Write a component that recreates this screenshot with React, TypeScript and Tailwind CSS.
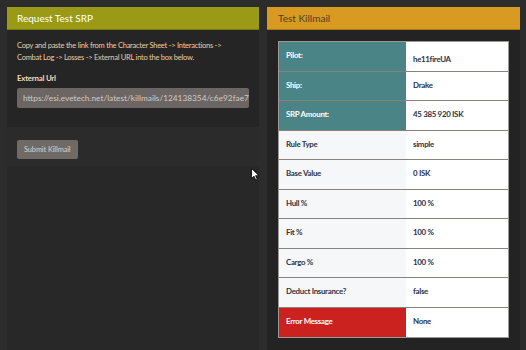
import React from "react";

const rows: { label: string; value: string; kind: "teal" | "light" | "error" }[] = [
  { label: "Pilot:", value: "he11fireUA", kind: "teal" },
  { label: "Ship:", value: "Drake", kind: "teal" },
  { label: "SRP Amount:", value: "45 385 920 ISK", kind: "teal" },
  { label: "Rule Type", value: "simple", kind: "light" },
  { label: "Base Value", value: "0 ISK", kind: "light" },
  { label: "Hull %", value: "100 %", kind: "light" },
  { label: "Fit %", value: "100 %", kind: "light" },
  { label: "Cargo %", value: "100 %", kind: "light" },
  { label: "Deduct Insurance?", value: "false", kind: "light" },
  { label: "Error Message", value: "None", kind: "error" },
];

const labelBg = {
  teal: "bg-[#4a8486] text-white",
  light: "bg-[#f6f7f9] text-[#2f3442]",
  error: "bg-[#cb221f] text-white",
};

export default function App() {
  return (
    <div
      className="relative w-[526px] h-[350px] overflow-hidden bg-[#2c2c2c] flex gap-[8px] pl-[7px] pt-[7px]"
      style={{ fontFamily: "Lato, 'Liberation Sans', sans-serif" }}
    >
      {/* left panel */}
      <section className="w-[252px] h-[343px] bg-[#252525] flex flex-col">
        <header className="h-[23px] bg-[#9b9a17] border-b border-[#7c7b12] px-[10px] flex items-center text-[10px] text-white">
          Request Test SRP
        </header>
        <div className="px-[10px] pt-[10px] pb-[19px]">
          <p className="text-[7.5px] leading-[12px] tracking-[-0.25px] whitespace-nowrap text-[#ebcfa6]">
            Copy and paste the link from the Character Sheet -&gt; Interactions -&gt;
            <br />
            Combat Log -&gt; Losses -&gt; External URL into the box below.
          </p>
          <div className="mt-[9px] leading-[10px] text-[7.8px] tracking-[-0.2px] font-bold text-[#f1dcc0]">
            External Url
          </div>
          <div className="mt-[5px] h-[20px] rounded-[2px] bg-[#6b6663] px-[6px] flex items-center overflow-hidden whitespace-nowrap text-[8.3px] text-[#cfcbc7]">
            https://esi.evetech.net/latest/killmails/124138354/c6e92fae7f
          </div>
        </div>
        <div className="bg-[#2b2b2b] px-[10px] py-[7px]">
          <button className="h-[19px] px-[7px] rounded-[2px] bg-[#6f6a66] text-[7.4px] tracking-[-0.1px] text-[#d6d2ce]">
            Submit Killmail
          </button>
        </div>
        <div className="flex-1 bg-[#282828]" />
      </section>

      {/* right panel */}
      <section className="w-[253px] h-[343px] bg-[#232323] flex flex-col">
        <header className="h-[23px] bg-[#d99a21] border-b border-[#a8761a] px-[11px] flex items-center text-[10px] text-[#4e3f22]">
          Test Killmail
        </header>
        <div className="px-[11px] pt-[11px]">
          <div className="border border-[#9c9996] bg-white">
            {rows.map((r, i) => (
              <div
                key={r.label}
                className={
                  "flex h-[29.5px] text-[7.9px] tracking-[-0.3px] font-bold " +
                  (i < rows.length - 1 ? "border-b-[1.5px] border-[#8b817b]" : "")
                }
              >
                <div className={"w-[127px] px-[7px] pt-[8px] " + labelBg[r.kind]}>{r.label}</div>
                <div
                  className={
                    "flex-1 bg-white px-[7px] text-[#2b3145] " + (i === 0 ? "pt-[12px]" : "pt-[8px]")
                  }
                >
                  {r.value}
                </div>
              </div>
            ))}
          </div>
        </div>
      </section>

      {/* mouse pointer */}
      <svg
        className="absolute left-[251px] top-[168px]"
        width="9"
        height="13"
        viewBox="0 0 9 13"
      >
        <path d="M0.5 0.5 L0.5 10.5 L3 8.2 L4.8 12 L6.3 11.3 L4.6 7.7 L8 7.7 Z" fill="#ffffff" stroke="#000000" strokeWidth="0.8" />
      </svg>
    </div>
  );
}
